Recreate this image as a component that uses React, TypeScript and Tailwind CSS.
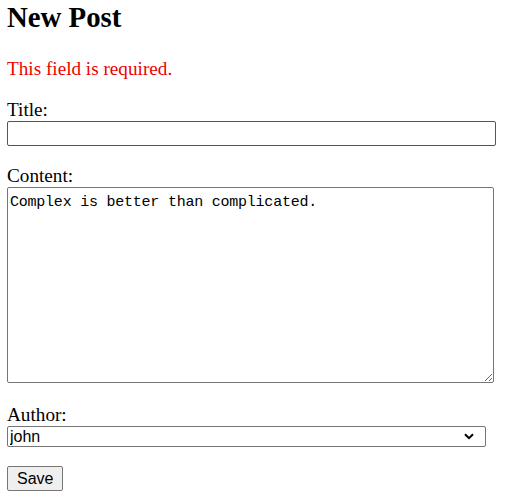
import React from "react";

export default function App() {
  return (
    <div className="px-[7px] pt-[1px] font-['Liberation_Serif',serif] text-black bg-white min-h-[498px]">
      <h2 className="text-[28.8px] leading-[33px] font-bold">New Post</h2>
      <p className="mt-[24px] text-[19.2px] leading-[22px] text-[#ee0000]">This field is required.</p>
      <div className="mt-[19px]">
        <label htmlFor="title" className="block text-[19.2px] leading-[22px]">Title:</label>
        <input
          id="title"
          type="text"
          className="block w-[489px] h-[25px] border border-[#555555] rounded-[2px] bg-white px-[2px] outline-none"
        />
      </div>
      <div className="mt-[19px]">
        <label htmlFor="content" className="block text-[19.2px] leading-[22px]">Content:</label>
        <textarea
          id="content"
          defaultValue="Complex is better than complicated."
          className="block w-[487px] h-[196px] border border-[#767676] rounded-[2px] bg-white px-[2px] pt-[5px] font-['Liberation_Mono',monospace] text-[15px] leading-[19px] tracking-[-0.23px] resize outline-none"
        />
      </div>
      <div className="mt-[21px]">
        <label htmlFor="author" className="block text-[19.2px] leading-[22px]">Author:</label>
        <div className="relative w-[479px]">
          <select
            id="author"
            defaultValue="john"
            className="block w-[479px] h-[21px] appearance-none border border-[#767676] rounded-[2px] bg-white pl-[2px] font-['Liberation_Sans',sans-serif] text-[16px] leading-[19px] outline-none"
          >
            <option value="john">john</option>
          </select>
          <svg
            className="pointer-events-none absolute right-[12px] top-[7px]"
            width="10"
            height="7"
            viewBox="0 0 10 7"
            fill="none"
          >
            <path d="M1 1.2 L5 5.2 L9 1.2" stroke="#000" strokeWidth="2" />
          </svg>
        </div>
      </div>
      <button
        type="button"
        className="mt-[19px] block h-[25px] px-[9px] border border-[#767676] rounded-[2px] bg-[#efefef] font-['Liberation_Sans',sans-serif] text-[16px] leading-[19px]"
      >
        Save
      </button>
    </div>
  );
}
